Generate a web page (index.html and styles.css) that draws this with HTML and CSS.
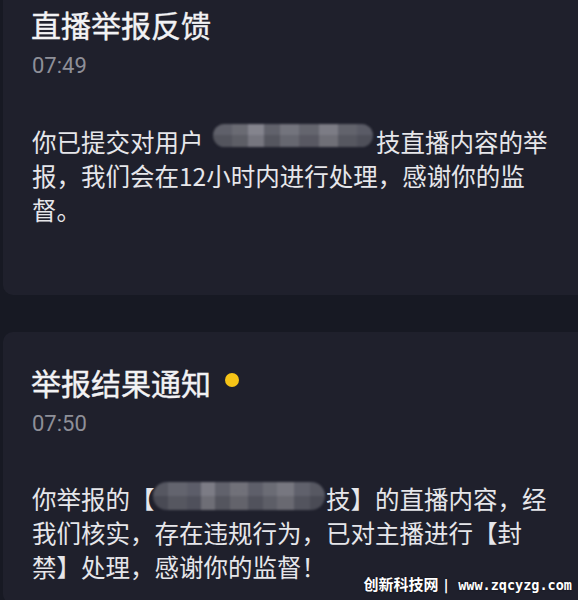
FILE: index.html
```html
<!DOCTYPE html>
<html lang="zh-CN">
<head>
    <meta charset="UTF-8">
    <meta name="viewport" content="width=device-width, initial-scale=1.0">
    <title>举报通知</title>
    <link rel="stylesheet" href="styles.css">
</head>
<body>
    <div class="list">
        <div class="card">
            <h2 class="title">直播举报反馈</h2>
            <div class="time">07:49</div>
            <p class="text">你已提交对用户<span class="masked masked-sm"></span>技直播内容的举报，我们会在12小时内进行处理，感谢你的监督。</p>
        </div>

        <div class="card">
            <h2 class="title">举报结果通知<span class="dot"></span></h2>
            <div class="time">07:50</div>
            <p class="text">你举报的【<span class="masked"></span>技】的直播内容，经我们核实，存在违规行为，已对主播进行【封禁】处理，感谢你的监督！</p>
        </div>
    </div>

    <div class="watermark">创新科技网 <span class="url">| www.zqcyzg.com</span></div>
</body>
</html>
```

FILE: styles.css
```css
body {
    margin: 0;
    background-color: #171923;
    font-family: "Noto Sans CJK SC", "Noto Sans", sans-serif;
    overflow: hidden;
    height: 600px;
    position: relative;
}
.list {
    margin: -26px -12px 0 3px;
    display: flex;
    flex-direction: column;
    gap: 37px;
}
.card {
    background-color: #1f202c;
    border-radius: 10px;
    padding: 30px 0 68px 28px;
}
.card:last-child {
    padding-bottom: 20px;
}
.title {
    margin: 0;
    font-size: 30px;
    line-height: 40px;
    font-weight: 400;
    -webkit-text-stroke: 0.4px #f2f2f4;
    color: #f2f2f4;
    display: flex;
    align-items: center;
}
.dot {
    width: 14px;
    height: 14px;
    border-radius: 50%;
    background-color: #f6c417;
    margin-left: 14px;
    margin-top: -4px;
}
.time {
    margin-top: 8px;
    padding-left: 1px;
    font-family: Roboto, "Noto Sans", sans-serif;
    font-size: 22px;
    line-height: 28px;
    color: #8e8f98;
}
.text {
    margin: 44px 0 0;
    padding-left: 1px;
    width: 520px;
    font-size: 24.5px;
    line-height: 34px;
    color: #e6e6ea;
}
.masked {
    display: inline-block;
    width: 172px;
    height: 28px;
    margin: 0 1.5px 0 -2px;
    vertical-align: -1px;
    border-radius: 14px;
    background:
        linear-gradient(180deg, rgba(255,255,255,0.04) 0 50%, rgba(0,0,0,0.08) 50% 100%),
        linear-gradient(90deg, #4f505b 0 9%, #5d5e68 9% 20%, #565763 20% 28%, #777780 28% 36%, #5b5c66 36% 45%, #6b6b74 45% 55%, #585964 55% 64%, #656670 64% 72%, #72727b 72% 82%, #5a5b66 82% 91%, #50515c 91% 100%);
    filter: blur(0.8px);
}
.masked-sm {
    width: 160px;
    height: 23px;
    margin: 0 3px 0 9.5px;
    vertical-align: 5px;
    border-radius: 12px;
    background:
        linear-gradient(180deg, rgba(255,255,255,0.03) 0 50%, rgba(0,0,0,0.08) 50% 100%),
        linear-gradient(90deg, #5a5b65 0 12%, #65666f 12% 22%, #80808a 22% 32%, #5c5d67 32% 42%, #6f7079 42% 54%, #5f606a 54% 66%, #787881 66% 78%, #5d5e68 78% 90%, #555661 90% 100%);
}
.watermark {
    position: absolute;
    right: 6px;
    bottom: 5px;
    font-size: 15px;
    font-weight: 700;
    color: #ffffff;
    line-height: 20px;
    text-shadow: 0 0 2px rgba(0, 0, 0, 0.6);
}
.url {
    font-family: "DejaVu Sans Mono", monospace;
    font-size: 13.5px;
}
```
